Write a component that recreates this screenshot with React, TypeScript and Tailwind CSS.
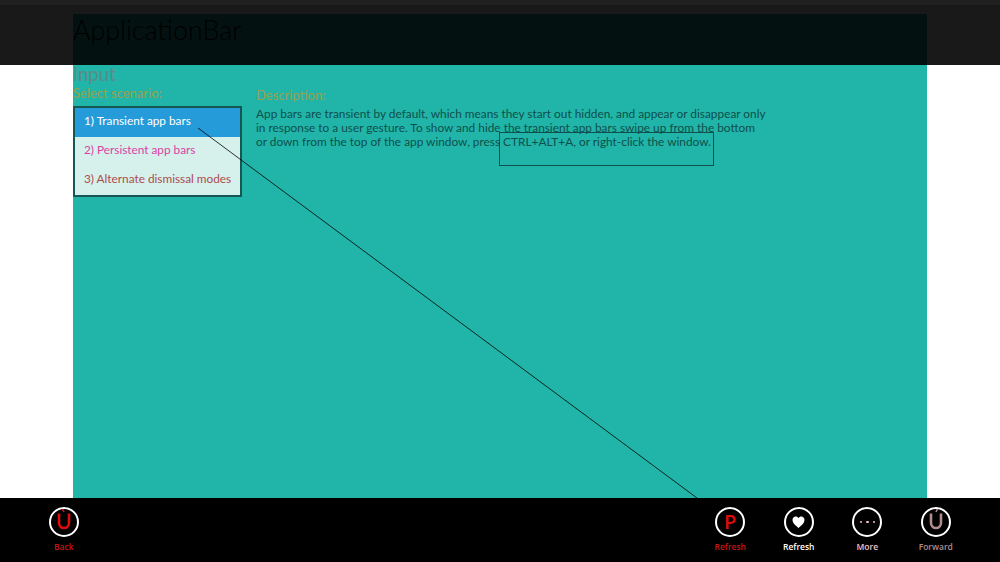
import React from 'react';

const scenarios = [
  { label: '1) Transient app bars', color: 'text-white bg-[#259cd9]' },
  { label: '2) Persistent app bars', color: 'text-[#dc3fa5]' },
  { label: '3) Alternate dismissal modes', color: 'text-[#ad4c4c]' },
];

function RoundIcon({ label, color, labelColor, children }: { label: string; color: string; labelColor: string; children: React.ReactNode }) {
  return (
    <div className="flex w-[68.5px] flex-col items-center">
      <div className={`flex h-[30px] w-[30px] items-center justify-center rounded-full border-2 border-white ${color}`}>
        {children}
      </div>
      <span className={`mt-[4px] font-['Open_Sans',sans-serif] text-[8.5px] leading-[12px] font-semibold ${labelColor}`}>{label}</span>
    </div>
  );
}

function UGlyph({ flip }: { flip?: boolean }) {
  return (
    <svg className={flip ? '-scale-x-100' : ''} width="20" height="26" viewBox="0 0 20 26" fill="none" stroke="currentColor" strokeWidth="2.6">
      <path d="M5 4.5v9.5a5 5 0 0 0 10 0V4.5" />
      <path d="M8.5 0l1.5 3" strokeWidth="1.6" />
    </svg>
  );
}

export default function App() {
  return (
    <div className="relative h-[562px] w-[1000px] overflow-hidden bg-white font-['Lato',sans-serif]">
      <div className="ml-[73px] h-[484px] w-[854px] translate-y-[14px] bg-[#20b5a8]">
        <div className="h-[50px] pt-[1px] text-[26.8px] leading-[30px] font-light text-black">ApplicationBar</div>
        <h2 className="text-[18.5px] leading-[21px] text-[#5b8b88]">Input</h2>
        <div className="flex">
          <div className="w-[183px]">
            <h3 className="text-[13px] leading-[16px] font-normal text-[#9aa04c]">Select scenario:</h3>
            <ul className="mt-[5px] h-[91px] w-[169px] border-2 border-[#175753] bg-[#d6f0ec] text-[11.8px]">
              {scenarios.map((s) => (
                <li key={s.label} className={`flex h-[29.3px] items-center pb-[4px] pl-[9px] ${s.color}`}>{s.label}</li>
              ))}
            </ul>
          </div>
          <div className="w-[512px]">
            <h3 className="mt-[2px] text-[13px] leading-[16px] text-[#9aa04c]">Description:</h3>
            <p className="mt-[4px] text-[11.85px] leading-[14px] text-[#0f4f4c]">
              App bars are transient by default, which means they start out hidden, and appear or disappear only in response to a user gesture. To show and hide the transient app bars swipe up from the bottom or down from the top of the app window, press CTRL+ALT+A, or right-click the window.
            </p>
          </div>
        </div>
      </div>

      {/* top app bar */}
      <div className="absolute inset-x-0 top-0 h-[65px] bg-black/90">
        <div className="h-[5px] bg-white/3" />
      </div>

      {/* bottom app bar */}
      <div className="absolute inset-x-0 bottom-0 flex h-[64px] items-start justify-between bg-black pt-[9px] pr-[30px] pl-[29.5px]">
        <RoundIcon label="Back" color="text-[#e00b0b]" labelColor="text-[#c41414]"><UGlyph /></RoundIcon>
        <div className="flex">
          <RoundIcon label="Refresh" color="text-[#e00b0b]" labelColor="text-[#c41414]">
            <span className="font-['Open_Sans',sans-serif] text-[20px] leading-none font-semibold">P</span>
          </RoundIcon>
          <RoundIcon label="Refresh" color="text-white" labelColor="text-white">
            <svg width="13" height="12" viewBox="0 0 14 13" fill="currentColor"><path d="M7 13C3 9.5 0.5 7.4 0.5 4.3 0.5 2 2.2 0.5 4 0.5c1.3 0 2.4.7 3 1.8C7.6 1.2 8.7.5 10 .5c1.8 0 3.5 1.5 3.5 3.8C13.5 7.4 11 9.5 7 13z" /></svg>
          </RoundIcon>
          <RoundIcon label="More" color="text-[#f2c4cc]" labelColor="text-[#f2c4cc]">
            <span className="flex gap-[4px]"><i className="h-[2.5px] w-[2.5px] rounded-full bg-[#f2c4cc]" /><i className="h-[2.5px] w-[2.5px] rounded-full bg-[#f2c4cc]" /><i className="h-[2.5px] w-[2.5px] rounded-full bg-[#f2c4cc]" /></span>
          </RoundIcon>
          <RoundIcon label="Forward" color="text-[#b08c8c]" labelColor="text-[#b08c8c]"><UGlyph flip /></RoundIcon>
        </div>
      </div>

      {/* drawn overlays */}
      <svg className="absolute inset-0" width="1000" height="562" fill="none">
        <path d="M198 128L697 498" stroke="#000" strokeWidth="0.8" />
        <rect x="499.5" y="132.5" width="214" height="33" stroke="#0f4f4c" />
      </svg>
    </div>
  );
}
